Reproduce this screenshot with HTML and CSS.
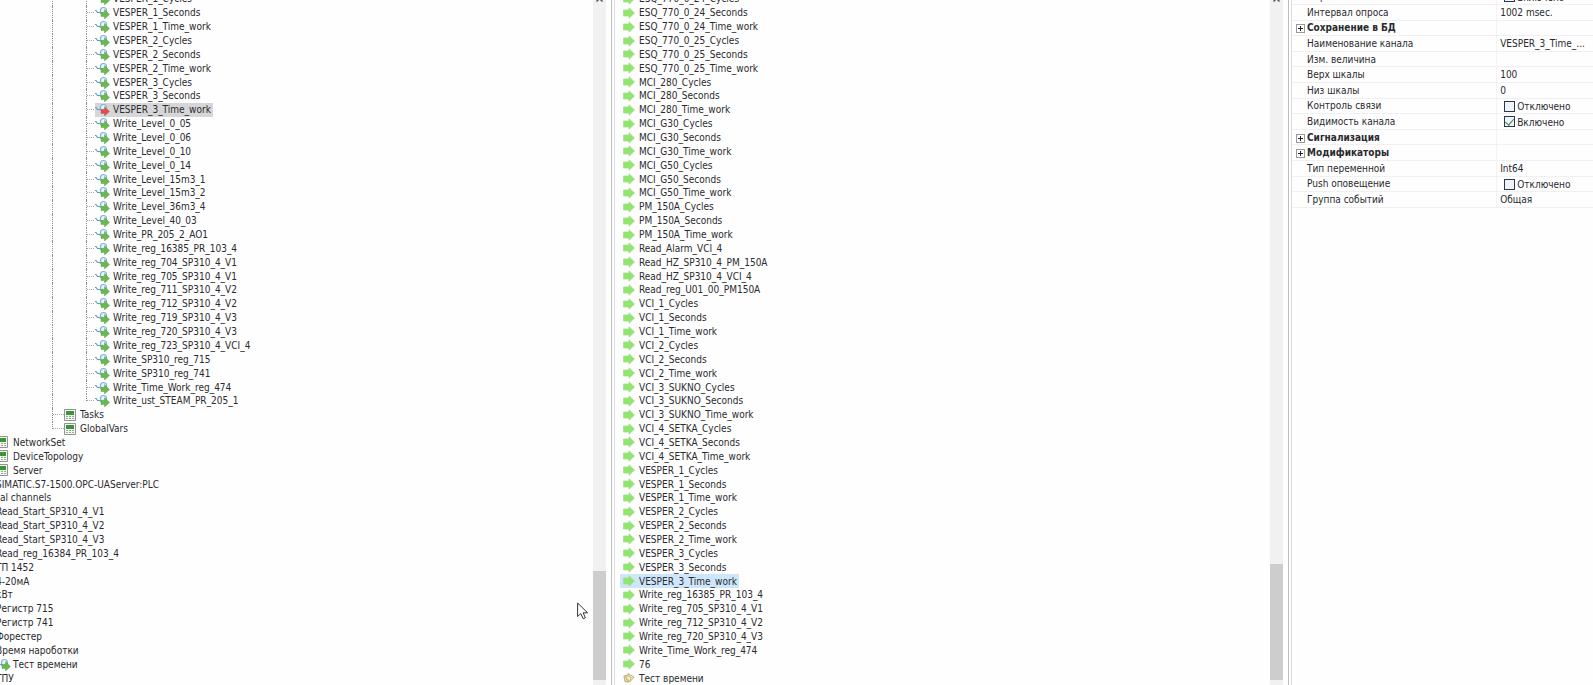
FILE: index.html
```html
<!DOCTYPE html>
<html lang="ru">
<head>
<meta charset="utf-8">
<title>Channels</title>
<link rel="stylesheet" href="styles.css">
</head>
<body>
<svg class="defs" aria-hidden="true">
  <symbol id="out" viewBox="0 0 15 13">
    <path d="M0 4.500h1l1.500 2h3" fill="none" stroke="#5b9bc8" stroke-width="1.200"/>
    <path d="M5.500 8V4.500a3 3 0 0 1 6 0V6" fill="#eaf4fa" stroke="#7db3d6" stroke-width="1.200"/>
    <path d="M6 6.300h3.500V3.600l5 4.900-5 4.500v-2.500H6z" fill="currentColor" stroke="#3f8a37" stroke-opacity=".5" stroke-width=".7"/>
  </symbol>
  <symbol id="arrow" viewBox="0 0 12 12">
    <path d="M.5 3H6V.8L11.500 6 6 11.200V9H.5z" fill="#90e66c" stroke="#a5dc91" stroke-width=".8"/>
  </symbol>
  <symbol id="sheet" viewBox="0 0 12 12">
    <path d="M.5.5h11v11H.5z" fill="#f4f7f3" stroke="#8f9590"/>
    <path d="M2 2h8v4H2z" fill="#3d9437"/>
    <path d="M2 7.500h8M2 9.500h8" stroke="#8fb08b" stroke-dasharray="2 1"/>
  </symbol>
  <symbol id="tag" viewBox="0 0 14 12">
    <path d="M1 3.500 6 2.500V.8L13 5 8 10.500H2.500z" fill="#f1e2ab" stroke="#b29a55" stroke-width=".8"/>
    <circle cx="5.500" cy="7" r="3.500" fill="#fbf3d4" stroke="#b29a55" stroke-width=".8"/>
    <path d="M4.500 5v3.500h2.500" fill="none" stroke="#98803f" stroke-width=".8"/>
  </symbol>
</svg>
<main class="app">
<section class="pane">
<ul class="list tree">
<li class="leaf"><span class="item"><svg><use href="#out"/></svg>VESPER_1_Cycles</span></li>
<li class="leaf"><span class="item"><svg><use href="#out"/></svg>VESPER_1_Seconds</span></li>
<li class="leaf"><span class="item"><svg><use href="#out"/></svg>VESPER_1_Time_work</span></li>
<li class="leaf"><span class="item"><svg><use href="#out"/></svg>VESPER_2_Cycles</span></li>
<li class="leaf"><span class="item"><svg><use href="#out"/></svg>VESPER_2_Seconds</span></li>
<li class="leaf"><span class="item"><svg><use href="#out"/></svg>VESPER_2_Time_work</span></li>
<li class="leaf"><span class="item"><svg><use href="#out"/></svg>VESPER_3_Cycles</span></li>
<li class="leaf"><span class="item"><svg><use href="#out"/></svg>VESPER_3_Seconds</span></li>
<li class="leaf"><span class="item current"><svg><use href="#out"/></svg>VESPER_3_Time_work</span></li>
<li class="leaf"><span class="item"><svg><use href="#out"/></svg>Write_Level_0_05</span></li>
<li class="leaf"><span class="item"><svg><use href="#out"/></svg>Write_Level_0_06</span></li>
<li class="leaf"><span class="item"><svg><use href="#out"/></svg>Write_Level_0_10</span></li>
<li class="leaf"><span class="item"><svg><use href="#out"/></svg>Write_Level_0_14</span></li>
<li class="leaf"><span class="item"><svg><use href="#out"/></svg>Write_Level_15m3_1</span></li>
<li class="leaf"><span class="item"><svg><use href="#out"/></svg>Write_Level_15m3_2</span></li>
<li class="leaf"><span class="item"><svg><use href="#out"/></svg>Write_Level_36m3_4</span></li>
<li class="leaf"><span class="item"><svg><use href="#out"/></svg>Write_Level_40_03</span></li>
<li class="leaf"><span class="item"><svg><use href="#out"/></svg>Write_PR_205_2_AO1</span></li>
<li class="leaf"><span class="item"><svg><use href="#out"/></svg>Write_reg_16385_PR_103_4</span></li>
<li class="leaf"><span class="item"><svg><use href="#out"/></svg>Write_reg_704_SP310_4_V1</span></li>
<li class="leaf"><span class="item"><svg><use href="#out"/></svg>Write_reg_705_SP310_4_V1</span></li>
<li class="leaf"><span class="item"><svg><use href="#out"/></svg>Write_reg_711_SP310_4_V2</span></li>
<li class="leaf"><span class="item"><svg><use href="#out"/></svg>Write_reg_712_SP310_4_V2</span></li>
<li class="leaf"><span class="item"><svg><use href="#out"/></svg>Write_reg_719_SP310_4_V3</span></li>
<li class="leaf"><span class="item"><svg><use href="#out"/></svg>Write_reg_720_SP310_4_V3</span></li>
<li class="leaf"><span class="item"><svg><use href="#out"/></svg>Write_reg_723_SP310_4_VCI_4</span></li>
<li class="leaf"><span class="item"><svg><use href="#out"/></svg>Write_SP310_reg_715</span></li>
<li class="leaf"><span class="item"><svg><use href="#out"/></svg>Write_SP310_reg_741</span></li>
<li class="leaf"><span class="item"><svg><use href="#out"/></svg>Write_Time_Work_reg_474</span></li>
<li class="leaf last"><span class="item"><svg><use href="#out"/></svg>Write_ust_STEAM_PR_205_1</span></li>
<li class="node"><span class="item"><svg class="small"><use href="#sheet"/></svg>Tasks</span></li>
<li class="node last"><span class="item"><svg class="small"><use href="#sheet"/></svg>GlobalVars</span></li>
<li class="group"><span class="item"><svg class="small"><use href="#sheet"/></svg>NetworkSet</span></li>
<li class="group"><span class="item"><svg class="small"><use href="#sheet"/></svg>DeviceTopology</span></li>
<li class="group"><span class="item"><svg class="small"><use href="#sheet"/></svg>Server</span></li>
<li class="root">SIMATIC.S7-1500.OPC-UAServer:PLC</li>
<li>al channels</li>
<li class="root">Read_Start_SP310_4_V1</li>
<li class="root">Read_Start_SP310_4_V2</li>
<li class="root">Read_Start_SP310_4_V3</li>
<li class="root">Read_reg_16384_PR_103_4</li>
<li class="root">ТП 1452</li>
<li class="root">4-20мА</li>
<li class="root">кВт</li>
<li class="root">Регистр 715</li>
<li class="root">Регистр 741</li>
<li class="root">Форестер</li>
<li class="root">Время нароботки</li>
<li class="group"><span class="item"><svg><use href="#out"/></svg>Тест времени</span></li>
<li class="root">ТПУ</li>
</ul>
<div class="scroll"><svg class="chevron" viewBox="0 0 7 4"><path d="M.5 3.500 3.500.5l3 3" fill="none" stroke="#555" stroke-width="1.500"/></svg><div class="thumb"></div></div>
</section>
<section class="pane channels">
<ul class="list">
<li><span class="item"><svg class="small"><use href="#arrow"/></svg>ESQ_770_0_24_Cycles</span></li>
<li><span class="item"><svg class="small"><use href="#arrow"/></svg>ESQ_770_0_24_Seconds</span></li>
<li><span class="item"><svg class="small"><use href="#arrow"/></svg>ESQ_770_0_24_Time_work</span></li>
<li><span class="item"><svg class="small"><use href="#arrow"/></svg>ESQ_770_0_25_Cycles</span></li>
<li><span class="item"><svg class="small"><use href="#arrow"/></svg>ESQ_770_0_25_Seconds</span></li>
<li><span class="item"><svg class="small"><use href="#arrow"/></svg>ESQ_770_0_25_Time_work</span></li>
<li><span class="item"><svg class="small"><use href="#arrow"/></svg>MCI_280_Cycles</span></li>
<li><span class="item"><svg class="small"><use href="#arrow"/></svg>MCI_280_Seconds</span></li>
<li><span class="item"><svg class="small"><use href="#arrow"/></svg>MCI_280_Time_work</span></li>
<li><span class="item"><svg class="small"><use href="#arrow"/></svg>MCI_G30_Cycles</span></li>
<li><span class="item"><svg class="small"><use href="#arrow"/></svg>MCI_G30_Seconds</span></li>
<li><span class="item"><svg class="small"><use href="#arrow"/></svg>MCI_G30_Time_work</span></li>
<li><span class="item"><svg class="small"><use href="#arrow"/></svg>MCI_G50_Cycles</span></li>
<li><span class="item"><svg class="small"><use href="#arrow"/></svg>MCI_G50_Seconds</span></li>
<li><span class="item"><svg class="small"><use href="#arrow"/></svg>MCI_G50_Time_work</span></li>
<li><span class="item"><svg class="small"><use href="#arrow"/></svg>PM_150A_Cycles</span></li>
<li><span class="item"><svg class="small"><use href="#arrow"/></svg>PM_150A_Seconds</span></li>
<li><span class="item"><svg class="small"><use href="#arrow"/></svg>PM_150A_Time_work</span></li>
<li><span class="item"><svg class="small"><use href="#arrow"/></svg>Read_Alarm_VCI_4</span></li>
<li><span class="item"><svg class="small"><use href="#arrow"/></svg>Read_HZ_SP310_4_PM_150A</span></li>
<li><span class="item"><svg class="small"><use href="#arrow"/></svg>Read_HZ_SP310_4_VCI_4</span></li>
<li><span class="item"><svg class="small"><use href="#arrow"/></svg>Read_reg_U01_00_PM150A</span></li>
<li><span class="item"><svg class="small"><use href="#arrow"/></svg>VCI_1_Cycles</span></li>
<li><span class="item"><svg class="small"><use href="#arrow"/></svg>VCI_1_Seconds</span></li>
<li><span class="item"><svg class="small"><use href="#arrow"/></svg>VCI_1_Time_work</span></li>
<li><span class="item"><svg class="small"><use href="#arrow"/></svg>VCI_2_Cycles</span></li>
<li><span class="item"><svg class="small"><use href="#arrow"/></svg>VCI_2_Seconds</span></li>
<li><span class="item"><svg class="small"><use href="#arrow"/></svg>VCI_2_Time_work</span></li>
<li><span class="item"><svg class="small"><use href="#arrow"/></svg>VCI_3_SUKNO_Cycles</span></li>
<li><span class="item"><svg class="small"><use href="#arrow"/></svg>VCI_3_SUKNO_Seconds</span></li>
<li><span class="item"><svg class="small"><use href="#arrow"/></svg>VCI_3_SUKNO_Time_work</span></li>
<li><span class="item"><svg class="small"><use href="#arrow"/></svg>VCI_4_SETKA_Cycles</span></li>
<li><span class="item"><svg class="small"><use href="#arrow"/></svg>VCI_4_SETKA_Seconds</span></li>
<li><span class="item"><svg class="small"><use href="#arrow"/></svg>VCI_4_SETKA_Time_work</span></li>
<li><span class="item"><svg class="small"><use href="#arrow"/></svg>VESPER_1_Cycles</span></li>
<li><span class="item"><svg class="small"><use href="#arrow"/></svg>VESPER_1_Seconds</span></li>
<li><span class="item"><svg class="small"><use href="#arrow"/></svg>VESPER_1_Time_work</span></li>
<li><span class="item"><svg class="small"><use href="#arrow"/></svg>VESPER_2_Cycles</span></li>
<li><span class="item"><svg class="small"><use href="#arrow"/></svg>VESPER_2_Seconds</span></li>
<li><span class="item"><svg class="small"><use href="#arrow"/></svg>VESPER_2_Time_work</span></li>
<li><span class="item"><svg class="small"><use href="#arrow"/></svg>VESPER_3_Cycles</span></li>
<li><span class="item"><svg class="small"><use href="#arrow"/></svg>VESPER_3_Seconds</span></li>
<li><span class="item current"><svg class="small"><use href="#arrow"/></svg>VESPER_3_Time_work</span></li>
<li><span class="item"><svg class="small"><use href="#arrow"/></svg>Write_reg_16385_PR_103_4</span></li>
<li><span class="item"><svg class="small"><use href="#arrow"/></svg>Write_reg_705_SP310_4_V1</span></li>
<li><span class="item"><svg class="small"><use href="#arrow"/></svg>Write_reg_712_SP310_4_V2</span></li>
<li><span class="item"><svg class="small"><use href="#arrow"/></svg>Write_reg_720_SP310_4_V3</span></li>
<li><span class="item"><svg class="small"><use href="#arrow"/></svg>Write_Time_Work_reg_474</span></li>
<li><span class="item"><svg class="small"><use href="#arrow"/></svg>76</span></li>
<li><span class="item"><svg class="small"><use href="#tag"/></svg>Тест времени</span></li>
</ul>
<div class="scroll"><svg class="chevron" viewBox="0 0 7 4"><path d="M.5 3.500 3.500.5l3 3" fill="none" stroke="#555" stroke-width="1.500"/></svg><div class="thumb"></div></div>
</section>
<section class="pane props">
<table>
<colgroup><col class="name"><col></colgroup>
<tr><th><label for="poll">Опрашивать канал</label></th><td><input type="checkbox" id="poll"><label for="poll">Включено</label></td></tr>
<tr><th>Интервал опроса</th><td>1002 msec.</td></tr>
<tr class="head"><th><button aria-label="Развернуть"></button>Сохранение в БД</th><td></td></tr>
<tr><th>Наименование канала</th><td>VESPER_3_Time_...</td></tr>
<tr><th>Изм. величина</th><td></td></tr>
<tr><th>Верх шкалы</th><td>100</td></tr>
<tr><th>Низ шкалы</th><td>0</td></tr>
<tr><th>Контроль связи</th><td><input type="checkbox" id="link"><label for="link">Отключено</label></td></tr>
<tr><th>Видимость канала</th><td><input type="checkbox" id="visible" checked><label for="visible">Включено</label></td></tr>
<tr class="head"><th><button aria-label="Развернуть"></button>Сигнализация</th><td></td></tr>
<tr class="head"><th><button aria-label="Развернуть"></button>Модификаторы</th><td></td></tr>
<tr><th>Тип переменной</th><td>Int64</td></tr>
<tr><th>Push оповещение</th><td><input type="checkbox" id="push"><label for="push">Отключено</label></td></tr>
<tr><th>Группа событий</th><td>Общая</td></tr>
</table>
</section>
</main>
<svg class="cursor" viewBox="0 0 12 18"><path d="M.6 1v13.500l3.200-2.900 2.400 5.200 2.200-1-2.300-5h4.500z" fill="#fff" stroke="#333"/></svg>
</body>
</html>
```
FILE: styles.css
```css
* { box-sizing: border-box; }
body {
  margin: 0;
  height: 100vh;
  overflow: hidden;
  background: #fefefe;
  color: #2a2a2e;
  font: 10px/13px "DejaVu Sans Condensed", "DejaVu Sans", sans-serif;
}
.defs { display: none; }
.app {
  display: grid;
  grid-template-columns: 612fr 677fr 304fr;
  height: 100vh;
}
.pane {
  display: flex;
  min-width: 0;
  overflow: hidden;
  border-right: 1px solid #bdbdbd;
}
.list {
  flex: 1;
  display: grid;
  grid-auto-rows: 1fr;
  height: calc(100vh + 8px);
  margin: -8px 0 0;
  padding: 0;
  list-style: none;
  white-space: nowrap;
}
.list li { display: flex; align-items: center; }
.item {
  display: flex;
  align-items: center;
  height: 100%;
  padding: 0 2px 0 0;
}
.item svg {
  flex: none;
  width: 15px;
  height: 13px;
  margin-right: 3px;
  color: #6ab94e;
}
.item svg.small { width: 12px; height: 12px; margin-right: 4px; }

/* Tree rails and branches */
.leaf::before {
  content: "";
  align-self: stretch;
  width: 33px;
  margin-left: 52px;
  border-left: 1px dotted #8c8c8c;
}
.leaf::after, .node::after {
  content: "";
  order: -1;
  align-self: stretch;
  width: 8px;
  border-left: 1px dotted #8c8c8c;
  background: repeating-linear-gradient(90deg, #aaa 0 1px, transparent 1px 2px) 0 50% / 100% 1px no-repeat;
}
.leaf::before { order: -2; }
.node::after { width: 11px; margin-left: 52px; }
.last::after { align-self: flex-start; height: 50%; background-position: 0 100%; }
.group .item { margin-left: -4px; }
.group .item svg { margin-right: 2px; }
.group .item svg.small { margin-right: 5px; }
.root { margin-left: -4px; }
.tree .current { background: #d6d6d8; }
.tree .current svg { color: #ef4550; }
.channels .current { background: #cde6fa; }

.channels { margin-left: 2px; border-left: 1px solid #ddd; }
.channels .list { padding-left: 5px; }
.channels .item { padding-left: 3px; }

.scroll {
  flex: none;
  display: flex;
  flex-direction: column;
  justify-content: flex-end;
  width: 13px;
  margin-right: 5px;
  padding-bottom: 5px;
  background: #f1f1f1;
}
.chevron { width: 7px; height: 4px; margin: -2px auto auto; }
.thumb { height: 16%; background: #cdcdcd; }
.channels .thumb { height: 17%; }

.props { margin-left: 2px; border: 0; border-left: 1px solid #ddd; align-items: flex-start; }
table {
  width: 100%;
  height: 219px;
  margin-top: -11px;
  border-collapse: collapse;
  table-layout: fixed;
}
.name { width: 68%; }
th, td {
  height: 15px;
  padding: 0 0 0 3px;
  border-bottom: 1px solid #f0f0f0;
  text-align: left;
  font-weight: normal;
  white-space: nowrap;
}
th { padding-left: 15px; border-right: 1px solid #f3f3f3; }
.head th { padding-left: 4px; font-weight: bold; }
button {
  width: 9px;
  height: 9px;
  margin: 0 2px 0 0;
  padding: 0;
  border: 1px solid #999;
  background:
    linear-gradient(#222, #222) center / 5px 1px no-repeat,
    linear-gradient(#222, #222) center / 1px 5px no-repeat,
    #fff;
  vertical-align: -1px;
}
input {
  appearance: none;
  width: 11px;
  height: 11px;
  margin: 0 2px 0 4px;
  border: 1px solid #26384f;
  background: #f1f3f8;
  vertical-align: middle;
}
input:checked::after {
  content: "";
  display: block;
  width: 4px;
  height: 7px;
  margin: 0 auto;
  border: solid #36843a;
  border-width: 0 1px 1px 0;
  transform: rotate(40deg);
}
td label { vertical-align: middle; }
.cursor {
  position: absolute;
  left: 577px;
  top: 602px;
  width: 12px;
  height: 18px;
}
```
